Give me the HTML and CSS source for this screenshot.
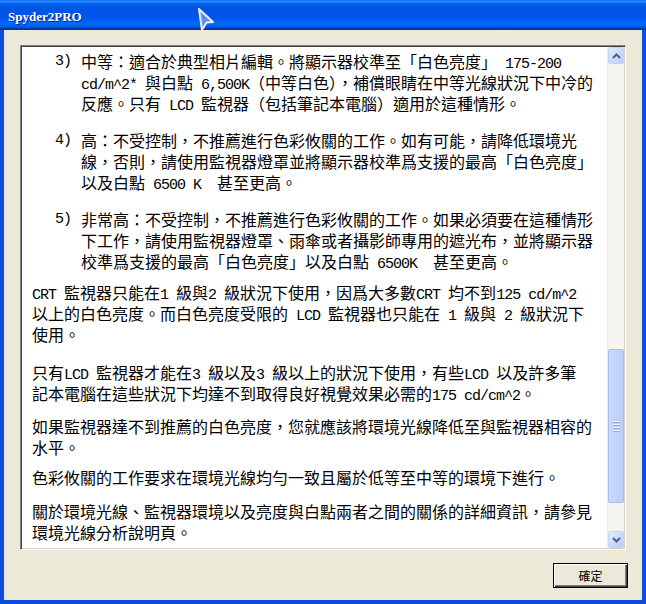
FILE: index.html
```html
<!DOCTYPE html>
<html lang="zh-Hant">
<head>
<meta charset="utf-8">
<title>Spyder2PRO</title>
<link rel="stylesheet" href="styles.css">
</head>
<body>
<div class="window">
  <div class="titlebar"><span class="title">Spyder2PRO</span></div>
  <div class="client">
    <div class="textbox">
      <div class="content">
        <div class="item gap16"><span class="num en">3)</span><div>中等：適合於典型相片編輯。將顯示器校準至「白色亮度」<span class="en"> 175-200</span><br><span class="en">cd/m^2* </span>與白點<span class="en"> 6,500K</span>（中等白色），補償眼睛在中等光線狀況下中冷的<br>反應。只有<span class="en"> LCD </span>監視器（包括筆記本電腦）適用於這種情形。</div></div>
        <div class="item gap16"><span class="num en">4)</span><div>高：不受控制，不推薦進行色彩攸關的工作。如有可能，請降低環境光<br>線，否則，請使用監視器燈罩並將顯示器校準爲支援的最高「白色亮度」<br>以及白點<span class="en"> 6500 K  </span>甚至更高。</div></div>
        <div class="item gap10"><span class="num en">5)</span><div>非常高：不受控制，不推薦進行色彩攸關的工作。如果必須要在這種情形<br>下工作，請使用監視器燈罩、雨傘或者攝影師專用的遮光布，並將顯示器<br>校準爲支援的最高「白色亮度」以及白點<span class="en"> 6500K  </span>甚至更高。</div></div>
        <p class="para gap17"><span class="en">CRT </span>監視器只能在<span class="en">1 </span>級與<span class="en">2 </span>級狀況下使用，因爲大多數<span class="en">CRT </span>均不到<span class="en">125 cd/m^2</span><br>以上的白色亮度。而白色亮度受限的<span class="en"> LCD </span>監視器也只能在<span class="en"> 1 </span>級與<span class="en"> 2 </span>級狀況下<br>使用。</p>
        <p class="para gap12">只有<span class="en">LCD </span>監視器才能在<span class="en">3 </span>級以及<span class="en">3 </span>級以上的狀況下使用，有些<span class="en">LCD </span>以及許多筆<br>記本電腦在這些狀況下均達不到取得良好視覺效果必需的<span class="en">175 cd/cm^2</span>。</p>
        <p class="para gap9">如果監視器達不到推薦的白色亮度，您就應該將環境光線降低至與監視器相容的<br>水平。</p>
        <p class="para gap13">色彩攸關的工作要求在環境光線均勻一致且屬於低等至中等的環境下進行。</p>
        <p class="para">關於環境光線、監視器環境以及亮度與白點兩者之間的關係的詳細資訊，請參見<br>環境光線分析說明頁。</p>
      </div>
      <div class="scrollbar">
        <div class="sb-btn"><svg width="9" height="6" viewBox="0 0 9 6"><path d="M1 5 L4.5 1.5 L8 5" fill="none" stroke="#4d6185" stroke-width="2"/></svg></div>
        <div class="sb-track">
          <div class="sb-thumb"><span class="grip"></span><span class="grip"></span><span class="grip"></span><span class="grip"></span></div>
        </div>
        <div class="sb-btn"><svg width="9" height="6" viewBox="0 0 9 6"><path d="M1 1 L4.5 4.5 L8 1" fill="none" stroke="#4d6185" stroke-width="2"/></svg></div>
      </div>
    </div>
    <div class="actions"><button class="btn">確定</button></div>
  </div>
  <svg class="cursor" width="20" height="26" viewBox="0 0 20 26"><path d="M2 2 L16 15 L9.5 15.5 L5 23 Z" fill="#5d8ff5" stroke="#e8f0ff" stroke-width="2" stroke-linejoin="round"/></svg>
</div>
</body>
</html>
```

FILE: styles.css
```css
html, body {
  margin: 0;
  padding: 0;
}
body {
  width: 646px;
  height: 604px;
  overflow: hidden;
  font-family: "Noto Sans CJK TC", "Noto Sans", sans-serif;
}
.window {
  position: relative;
  width: 646px;
  height: 604px;
  box-sizing: border-box;
  display: flex;
  flex-direction: column;
  background: #0b4ddc;
  padding: 0 4px 4px 4px;
}
.titlebar {
  height: 30px;
  margin: 0 -4px;
  padding: 0 0 0 8px;
  display: flex;
  align-items: center;
  background: linear-gradient(to bottom, #0058ee 0%, #3593ff 4%, #288eff 6%, #127dff 8%, #036ffc 10%, #0262ee 14%, #0057e5 20%, #0054e3 24%, #0055eb 56%, #005bf5 66%, #026afe 76%, #0062ef 86%, #0052d6 92%, #0040ab 94%, #003092 100%);
}
.title {
  font-family: "Liberation Serif", serif;
  font-weight: bold;
  font-size: 13px;
  color: #fff;
  text-shadow: 1px 1px 0 #0a1f8a;
  padding-top: 3px;
}
.client {
  flex: 1;
  background: #ece9d8;
  display: flex;
  flex-direction: column;
  padding: 15px 16px 12px 16px;
}
.textbox {
  height: 505px;
  box-sizing: border-box;
  display: flex;
  border: 1px solid;
  border-color: #848284 #fff #fff #848284;
  box-shadow: inset 1px 1px 0 #424142, inset -1px -1px 0 #d6d3ce;
  padding: 1px;
  background: #fff;
}
.content {
  flex: 1;
  padding: 4px 0 0 10px;
  font-size: 16px;
  line-height: 21px;
  color: #000;
  white-space: nowrap;
  overflow: hidden;
}
.en {
  font-family: "Liberation Mono", monospace;
  font-size: 15px;
  line-height: 14px;
  letter-spacing: -1px;
  white-space: pre;
}
.item {
  display: flex;
  padding-left: 23px;
}
.num {
  width: 26px;
  flex: none;
  line-height: 21px;
}
.para {
  margin: 0;
}
.gap17 { margin-bottom: 17px; }
.gap16 { margin-bottom: 16px; }
.gap13 { margin-bottom: 13px; }
.gap12 { margin-bottom: 12px; }
.gap10 { margin-bottom: 10px; }
.gap9 { margin-bottom: 9px; }
.scrollbar {
  width: 17px;
  flex: none;
  display: flex;
  flex-direction: column;
  background: #f6f5f0;
  border-left: 1px solid #eeede5;
  box-sizing: border-box;
}
.sb-btn {
  height: 17px;
  box-sizing: border-box;
  border: 1px solid #c3d3fd;
  border-radius: 2px;
  background: linear-gradient(to bottom right, #e4ecfd, #b9ccf9);
  display: flex;
  align-items: center;
  justify-content: center;
}
.sb-track {
  flex: 1;
  display: flex;
  flex-direction: column;
  justify-content: flex-end;
  padding-bottom: 28px;
}
.sb-thumb {
  height: 154px;
  box-sizing: border-box;
  border: 1px solid #a8bdec;
  border-radius: 2px;
  background: linear-gradient(to right, #c9d8fc, #bccff9);
  display: flex;
  flex-direction: column;
  align-items: center;
  justify-content: center;
  gap: 1px;
}
.grip {
  width: 7px;
  height: 1px;
  background: #eef3fe;
  box-shadow: 0 1px 0 #8ca6e4;
  margin-bottom: 1px;
}
.actions {
  display: flex;
  justify-content: flex-end;
  margin-top: 13px;
  margin-right: -2px;
}
.btn {
  width: 75px;
  height: 25px;
  box-sizing: border-box;
  border: 1px solid #000;
  background: #ece9d8;
  box-shadow: inset 1px 1px 0 #fff, inset -1px -1px 0 #404040, inset -2px -2px 0 #808080;
  font-family: "Noto Sans CJK TC", sans-serif;
  font-size: 12px;
  color: #000;
  padding: 0;
}
.cursor {
  position: absolute;
  left: 197px;
  top: 7px;
}
```
